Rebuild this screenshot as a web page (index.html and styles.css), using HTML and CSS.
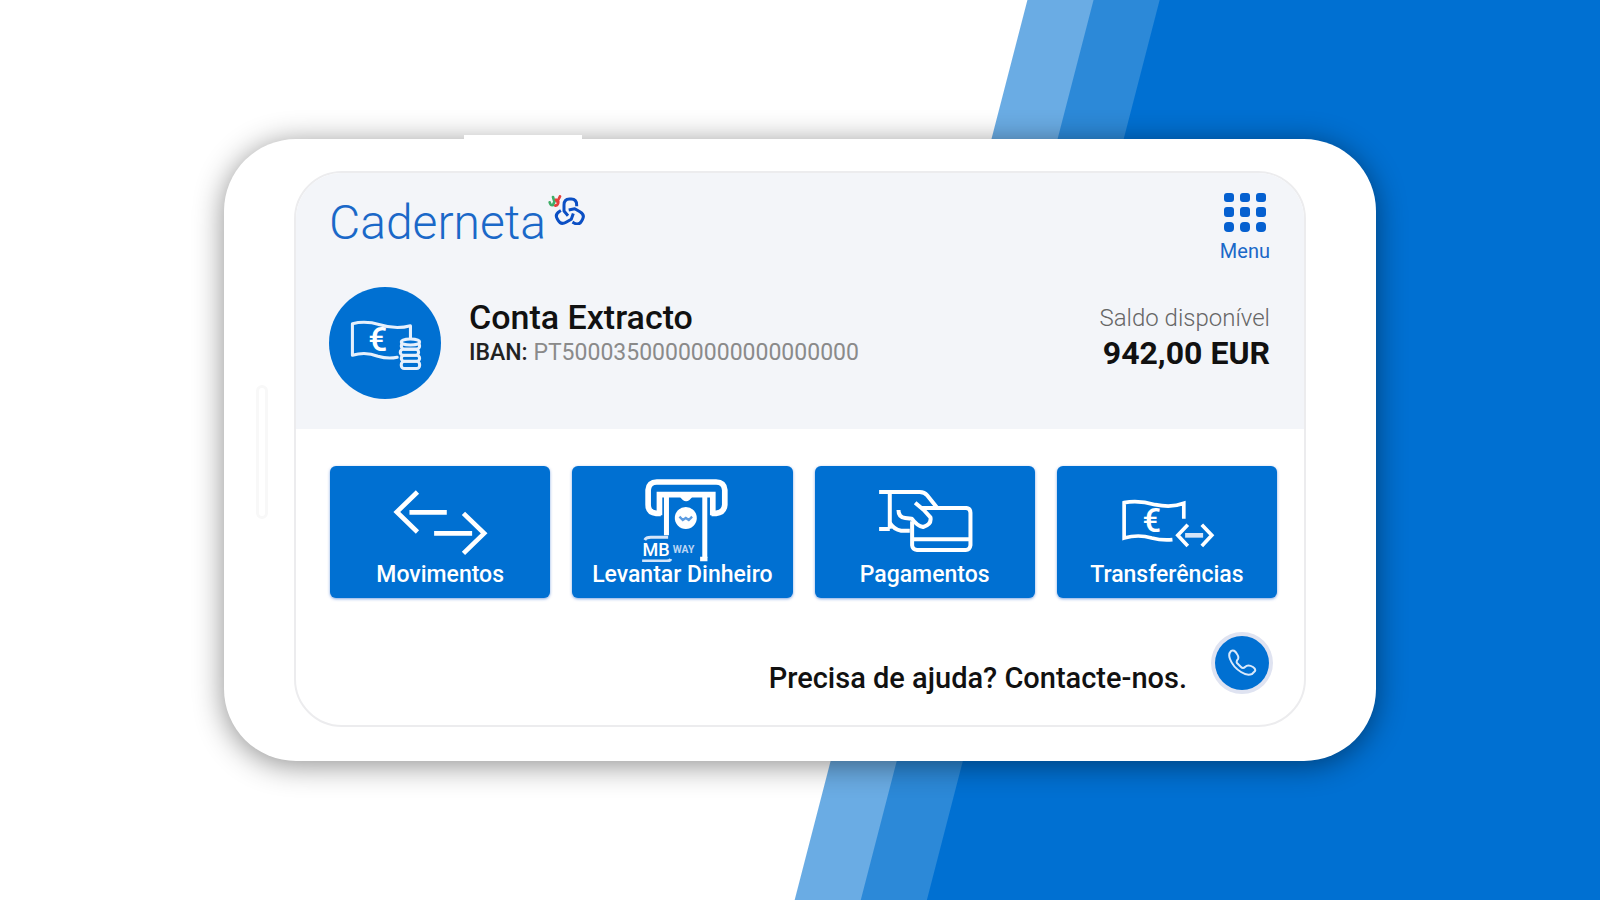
FILE: index.html
```html
<!DOCTYPE html>
<html lang="pt">
<head>
    <meta charset="UTF-8">
    <meta name="viewport" content="width=device-width, initial-scale=1.0">
    <title>Caderneta</title>
    <link rel="stylesheet" href="styles.css">
</head>
<body>
    <main class="phone">
        <span class="side-button"></span>
        <span class="speaker"></span>
        <div class="screen">
            <header class="header">
                <div class="top-row">
                    <h1 class="logo">Caderneta
                        <svg class="logo-mark" viewBox="0 0 114 90" aria-hidden="true">
                            <g fill="none" stroke-width="8" stroke-linecap="round">
                                <path stroke="#3fae68" d="M15 6 L18 16 M5 22 Q7 32 15 30 L20 18"/>
                                <path stroke="#e5403c" d="M24 14 L28 20 L36 4 M22 32 Q31 30 31 20"/>
                            </g>
                            <g fill="none" stroke="#0b4fc4" stroke-width="9" stroke-linejoin="round">
                                <path id="loop" d="M60 62 L48 48 V30 Q48 12 64 12 H70 Q86 12 86 30 V34"/>
                                <use href="#loop" transform="rotate(120 66 54)"/>
                                <use href="#loop" transform="rotate(240 66 54)"/>
                            </g>
                        </svg>
                    </h1>
                    <button class="menu" type="button">
                        <svg class="menu-icon" viewBox="0 0 42 39" aria-hidden="true">
                            <g fill="#0560d0">
                                <rect x="0" y="0" width="10" height="9" rx="3"/>
                                <rect x="16" y="0" width="10" height="9" rx="3"/>
                                <rect x="32" y="0" width="10" height="9" rx="3"/>
                                <rect x="0" y="14" width="10" height="10" rx="3"/>
                                <rect x="16" y="14" width="10" height="10" rx="3"/>
                                <rect x="32" y="14" width="10" height="10" rx="3"/>
                                <rect x="0" y="29" width="10" height="10" rx="4"/>
                                <rect x="16" y="29" width="10" height="10" rx="4"/>
                                <rect x="32" y="29" width="10" height="10" rx="4"/>
                            </g>
                        </svg>
                        Menu
                    </button>
                </div>
                <div class="account">
                    <svg class="account-icon" viewBox="0 0 110 110" aria-hidden="true">
                        <circle cx="55" cy="55" r="55" fill="#0070d2"/>
                        <g fill="none" stroke="#e6f0fc" stroke-width="3" stroke-linejoin="round" stroke-linecap="round">
                            <path d="M80 50 V38 Q66 42 50 37 Q36 33 23 36 V67 Q36 63 48 68 Q58 71 67 69"/>
                        </g>
                        <text class="euro" x="48" y="63" text-anchor="middle" font-size="33">€</text>
                        <g fill="#0070d2" stroke="#e6f0fc" stroke-width="3">
                            <rect x="71" y="73" width="18" height="7" rx="3"/>
                            <rect x="71" y="67" width="18" height="6" rx="3"/>
                            <rect x="70" y="61" width="18" height="6" rx="3"/>
                            <rect x="71" y="55" width="18" height="6" rx="3"/>
                            <ellipse cx="80" cy="54" rx="9" ry="3"/>
                        </g>
                    </svg>
                    <div class="account-info">
                        <h2>Conta Extracto</h2>
                        <p><b>IBAN:</b> PT50003500000000000000000</p>
                    </div>
                    <div class="balance">
                        <p>Saldo disponível</p>
                        <strong>942,00 EUR</strong>
                    </div>
                </div>
            </header>

            <nav class="tiles">
                <button class="tile" type="button">
                    <svg viewBox="32 32 660 288" aria-hidden="true">
                        <g fill="none" stroke="#fff" stroke-width="14">
                            <path d="M294 110 L232 170 L294 230 M270 171 H382"/>
                            <path d="M432 174 L494 234 L432 294 M344 234 H458"/>
                        </g>
                    </svg>
                    Movimentos
                </button>
                <button class="tile" type="button">
                    <svg viewBox="38 32 660 288" aria-hidden="true">
                        <g fill="none" stroke="#fff">
                            <path stroke-width="17" d="M304 174 H290 Q266 172 266 148 V104 Q268 80 292 80 H470 Q494 80 496 104 V148 Q494 172 470 174 H456"/>
                            <path stroke-width="17" d="M300 180 V118 H460 V180"/>
                            <path stroke-width="15" d="M321 120 V240 M436 120 V308"/>
                        </g>
                        <path fill="#fff" d="M360 122 H400 Q380 154 360 122 Z M422 304 H444 V318 H422 Z"/>
                        <circle cx="379" cy="188" r="33" fill="#fff"/>
                        <path d="M360 184 L370 194 L379 188 L388 194 L398 184" fill="none" stroke="#5b9be0" stroke-width="7"/>
                        <path d="M256 254 Q260 246 274 246 H326 M248 317 H322 Q332 317 334 311" fill="none" stroke="#d5e5f8" stroke-width="9"/>
                        <text class="mb" x="249" y="303" font-size="54">MB</text>
                        <text class="way" x="340" y="294" font-size="31">WAY</text>
                    </svg>
                    Levantar Dinheiro
                </button>
                <button class="tile" type="button">
                    <svg viewBox="30 32 660 288" aria-hidden="true">
                        <g fill="none" stroke="#fff" stroke-width="12" stroke-linejoin="round">
                            <path d="M222 110 H344 Q358 110 366 120 L396 157"/>
                            <path d="M254 110 V220 M222 221 H254"/>
                            <path d="M254 202 Q266 222 288 226 H314"/>
                            <path d="M280 164 Q280 186 300 188 L320 190 Q336 212 354 215 Q380 208 376 186 L356 164 L330 142"/>
                            <path d="M350 158 H484 Q496 160 496 172 V270 Q494 284 482 284 H336 Q322 282 321 270 V198 M321 252 H496"/>
                        </g>
                    </svg>
                    Pagamentos
                </button>
                <button class="tile" type="button">
                    <svg viewBox="36 32 660 288" aria-hidden="true">
                        <g fill="none" stroke="#fff" stroke-width="11">
                            <path d="M416 190 V144 Q380 158 330 148 Q280 134 237 142 V248 Q280 236 320 248 Q350 256 382 253"/>
                            <path d="M428 208 L398 240 L428 272 M470 208 L500 240 L470 272"/>
                            <path d="M420 240 H474" stroke="#d5e5f8" stroke-width="14"/>
                        </g>
                        <text class="euro" x="320" y="230" text-anchor="middle" font-size="98">€</text>
                    </svg>
                    Transferências
                </button>
            </nav>

            <footer class="help">
                <p>Precisa de ajuda? Contacte-nos.</p>
                <button class="call" type="button" aria-label="Contacte-nos">
                    <svg viewBox="0 0 30 30" aria-hidden="true">
                        <path fill="none" stroke="#d9e9fb" stroke-width="2" stroke-linejoin="round" d="M4 3 Q1 6 3 11 Q6 19 14 24 Q20 28 25 26 L28 23 Q29 21 26 19 Q21 16 18 19 Q16 21 14 19 L10 15 Q9 13 11 11 Q12 9 10 6 Q7 1 4 3 Z"/>
                    </svg>
                </button>
            </footer>
        </div>
    </main>
</body>
</html>
```
FILE: styles.css
```css
* {
    box-sizing: border-box;
}

body {
    margin: 0;
    min-height: 100vh;
    font-family: Roboto, "Liberation Sans", sans-serif;
    color: #111;
    background: linear-gradient(104.5deg,
        #fff calc(50% + 107px),
        #6aace4 calc(50% + 108px), #6aace4 calc(50% + 171px),
        #2c89d8 calc(50% + 172px), #2c89d8 calc(50% + 235px),
        #0070d2 calc(50% + 236px));
    display: flex;
    justify-content: center;
    align-items: center;
}

h1, h2, p {
    margin: 0;
}

button {
    font-family: inherit;
    border: none;
    padding: 0;
    cursor: pointer;
}

.phone {
    position: relative;
    width: 72%;
    padding: 32px 70px 34px;
    background: #fff;
    border-radius: 72px;
    box-shadow: 0 4px 30px rgba(0, 0, 0, 0.45);
}

.side-button {
    position: absolute;
    top: -4px;
    left: 240px;
    width: 118px;
    height: 8px;
    background: #fff;
}

.speaker {
    position: absolute;
    top: 246px;
    left: 32px;
    width: 12px;
    height: 134px;
    border: 3px solid #f8f8f8;
    border-radius: 6px;
}

.screen {
    border: 2px solid #ececee;
    border-radius: 48px;
    overflow: hidden;
}

.header {
    background: #f3f5f9;
    padding: 20px 34px 30px 33px;
}

.top-row {
    display: flex;
    justify-content: space-between;
    align-items: flex-start;
    margin-bottom: 22px;
}

.logo {
    display: flex;
    align-items: flex-start;
    font-size: 48px;
    line-height: 60px;
    font-weight: 300;
    color: #1a68c8;
}

.logo-mark {
    width: 38px;
    height: 30px;
    margin-top: 2px;
    margin-left: 2px;
}

.menu {
    display: flex;
    flex-direction: column;
    align-items: center;
    height: 72px;
    background: none;
    font-size: 20px;
    line-height: 38px;
    color: #1a68c8;
}

.menu-icon {
    flex-shrink: 0;
    width: 42px;
    height: 39px;
}

.account {
    display: flex;
    align-items: flex-start;
}

.account-icon {
    width: 112px;
    height: 112px;
    margin-right: 28px;
}

.account-info,
.balance {
    padding-top: 12px;
}

.account-info h2 {
    font-size: 34px;
    line-height: 36px;
    font-weight: 500;
}

.account-info p {
    font-size: 23px;
    line-height: 36px;
    color: #8a8a8a;
}

.account-info b {
    font-weight: 500;
    color: #222;
}

.balance {
    margin-left: auto;
    text-align: right;
}

.balance p {
    font-size: 24px;
    line-height: 38px;
    font-weight: 300;
    color: #666;
}

.balance strong {
    display: block;
    font-size: 32px;
    line-height: 32px;
    font-weight: 700;
}

.tiles {
    display: grid;
    grid-template-columns: repeat(4, 1fr);
    gap: 22px;
    padding: 37px 27px 36px 34px;
}

.tile {
    display: flex;
    flex-direction: column;
    align-items: center;
    height: 132px;
    background: #0070d2;
    border-radius: 6px;
    box-shadow: 0 1px 3px rgba(0, 80, 200, 0.5);
    color: #fff;
    font-size: 23px;
    line-height: 26px;
    font-weight: 500;
}

.tile svg {
    width: 100%;
    height: 96px;
}

.euro,
.mb {
    fill: #fff;
    font-weight: 500;
}

.way {
    fill: #b9d5f4;
    font-weight: 700;
}

.help {
    display: flex;
    justify-content: flex-end;
    align-items: flex-start;
    gap: 28px;
    padding: 0 35px 29px;
}

.help p {
    padding-top: 26px;
    font-size: 29px;
    line-height: 36px;
    font-weight: 500;
}

.call {
    display: flex;
    justify-content: center;
    align-items: center;
    width: 54px;
    height: 54px;
    margin-top: 2px;
    border-radius: 50%;
    background: #0070d2;
    box-shadow: 0 0 0 4px #dfe3f1;
}

.call svg {
    width: 30px;
    height: 30px;
}
```
